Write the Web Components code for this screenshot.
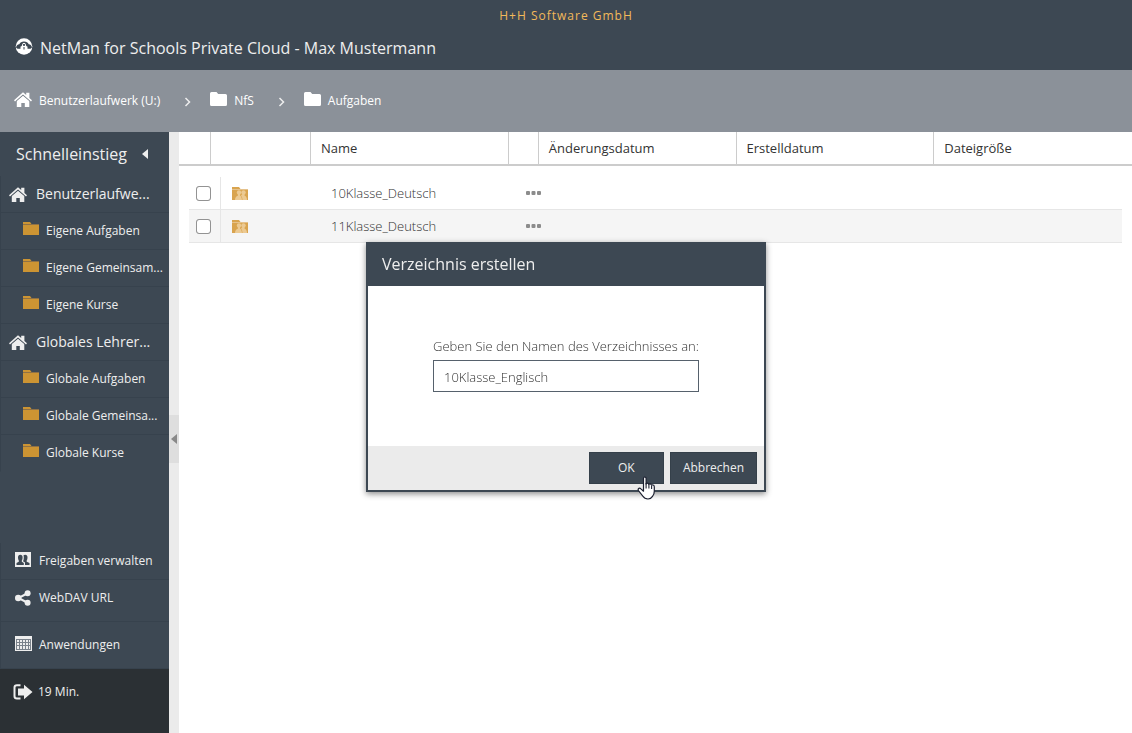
<!DOCTYPE html>
<html lang="de">
<head>
<meta charset="utf-8">
<meta name="viewport" content="width=device-width, initial-scale=1">
<title>NetMan for Schools Private Cloud</title>
<style>
  html, body { margin: 0; }
  body {
    --dark: #3d4853;
    --light: #eeeeee;
    font: 13px/20px "Open Sans", "Noto Sans", sans-serif;
    color: #333;
    background: #fff;
  }
</style>
</head>
<body>
<nm-app>
  <nm-header slot="header" company="H+H Software GmbH">NetMan for Schools Private Cloud - Max Mustermann</nm-header>
  <nm-breadcrumb slot="path">
    <nm-crumb icon="home">Benutzerlaufwerk (U:)</nm-crumb>
    <nm-crumb icon="folder-round">NfS</nm-crumb>
    <nm-crumb icon="folder-round">Aufgaben</nm-crumb>
  </nm-breadcrumb>
  <nm-sidebar slot="sidebar" heading="Schnelleinstieg">
    <nm-nav-item kind="group" icon="home">Benutzerlaufwe...</nm-nav-item>
    <nm-nav-item kind="child" icon="folder">Eigene Aufgaben</nm-nav-item>
    <nm-nav-item kind="child" icon="folder">Eigene Gemeinsam...</nm-nav-item>
    <nm-nav-item kind="child" icon="folder">Eigene Kurse</nm-nav-item>
    <nm-nav-item kind="group" icon="home">Globales Lehrer...</nm-nav-item>
    <nm-nav-item kind="child" icon="folder">Globale Aufgaben</nm-nav-item>
    <nm-nav-item kind="child" icon="folder">Globale Gemeinsa...</nm-nav-item>
    <nm-nav-item kind="child" icon="folder">Globale Kurse</nm-nav-item>
    <nm-nav-item slot="tools" kind="tool" icon="users">Freigaben verwalten</nm-nav-item>
    <nm-nav-item slot="tools" kind="tool" icon="share">WebDAV URL</nm-nav-item>
    <nm-nav-item slot="tools" kind="tool" tall icon="grid">Anwendungen</nm-nav-item>
    <nm-nav-item slot="session" kind="session" icon="exit">19 Min.</nm-nav-item>
  </nm-sidebar>
  <nm-file-table></nm-file-table>
</nm-app>
<nm-dialog heading="Verzeichnis erstellen">
  <nm-field label="Geben Sie den Namen des Verzeichnisses an:" value="10Klasse_Englisch"></nm-field>
  <nm-button slot="actions" wide>OK<nm-icon slot="pointer" name="hand"></nm-icon></nm-button>
  <nm-button slot="actions">Abbrechen</nm-button>
</nm-dialog>

<script>
const base = '*, *::before, *::after { box-sizing: border-box; }';

const define = (name, render) => customElements.define(name, class extends HTMLElement {
  constructor() {
    super();
    this.attachShadow({ mode: 'open' });
  }
  connectedCallback() {
    const { css, html } = render(this);
    const template = document.createElement('template');
    template.innerHTML = `<style>${base}${css}</style>${html}`;
    this.shadowRoot.replaceChildren(template.content.cloneNode(true));
  }
});

const icons = {
  cloud: [18, 17, `<circle cx="9" cy="8.500" r="8.300" fill="#fff"/><path d="M1 9.500Q1.500 6.500 4.300 6.300 5.500 3.600 9 3.600t4.700 2.700Q16.500 6.500 17 9.500L15.500 10.800H12.500V8.500H5.500V10.800H2.500z" fill="#3d4853"/><path d="M6.300 7.800h5.400v5H6.300z" fill="#fff"/><path d="M7.500 8V6.800a1.500 1.500 0 0 1 3 0V8" fill="none" stroke="#fff" stroke-width="1"/><path d="M8.500 9h1v2.500h-1z" fill="#3d4853"/>`],
  home: [18, 15, `<path d="M9 3.800 15.300 9V15h-4.500v-4H7.300v4H2.800V9z" fill="currentColor"/><path d="M0 8.200 9 .3l3.200 2.800V.8h3.200v5.100L18 8.200l-1 1.200-8-7-8 7z" fill="currentColor"/><path d="m2 9.300 7-6.200 7 6.200" fill="none" stroke="#3d4853" stroke-opacity=".35" stroke-width=".6"/>`],
  folder: [16, 13, `<path d="M0 0h7l1.500 2H0zM0 3h16v10H0z" fill="#cc9433"/><path d="M0 2h16v1H0z" fill="#8f7145"/>`],
  'folder-round': [17, 14, `<path d="M1.500 0h5l1.700 2h7.300Q17 2 17 3.500v9q0 1.500-1.500 1.500h-14Q0 14 0 12.500v-11Q0 0 1.500 0z" fill="currentColor"/>`],
  'folder-shared': [16, 13, `<path d="M0 0h7l1.500 2H0zM0 3h16v10H0z" fill="#d9a44f"/><path d="M0 2h16v1H0z" fill="#e5c28c"/><g fill="#ecca93"><circle cx="7" cy="5.500" r="2.200"/><circle cx="11.500" cy="5.500" r="2.200"/><path d="M3 13q0-3.500 3-4.500V7h2v1.500q1.500.5 2 4.500zM10.500 13q0-3-1.500-4.500L10.500 7h2v1.500q2.500 1 2.500 4.500z"/></g>`],
  users: [16, 15, `<path d="M0 0h16v15H0z" fill="currentColor"/><g fill="#3d4853"><path d="M1.500 13v-2l2.300-1.300V8.500Q3 7.500 3 5.500 3 2.800 5.300 2.800T7.600 5.500q0 2-.8 3v1.200L8.800 11v2z"/><path d="M10 13v-2.500L8 9.200q.8-1 .8-3.700 0-1.500-.4-2Q9 2.800 10.200 2.800q2.300 0 2.300 2.700 0 2-.8 3v1.200l2.800 1.300v2z"/></g>`],
  share: [16, 16, `<path d="m13 3-9.500 5L13 13" fill="none" stroke="currentColor" stroke-width="2"/><circle cx="3.200" cy="8" r="3.200" fill="currentColor"/><circle cx="12.600" cy="3.300" r="3" fill="currentColor"/><circle cx="12.600" cy="12.700" r="3" fill="currentColor"/>`],
  grid: [17, 15, `<path d="M0 0h17v15H0z" fill="currentColor"/><path d="M1.500 3.500v10M4.500 3.500v10M7.500 3.500v10M10.500 3.500v10M13.500 3.500v10M15.500 3.500v10M1 3.500h15M1 6.500h15M1 9.500h15M1 13.500h15" stroke="#7a828b" stroke-width="1"/>`],
  exit: [20, 16, `<path d="M7.500 1.200H4Q1.500 1.200 1.500 3.500v8.700q0 2.300 2.500 2.300h3.500" fill="none" stroke="currentColor" stroke-width="2"/><path d="M5 4.500h6V.8l8.500 7.200-8.500 7.200v-3.700H5z" fill="currentColor"/>`],
  chevron: [7, 10, `<path d="m1.500 1 4 4-4 4" fill="none" stroke="#eee" stroke-width="1.500"/>`],
  left: [6, 10, `<path d="M6 0v10L0 5z" fill="currentColor"/>`],
  dots: [15, 4, `<path d="M0 1q0-1 1-1h2q1 0 1 1v2q0 1-1 1H1Q0 4 0 3zM5.500 1q0-1 1-1h2q1 0 1 1v2q0 1-1 1h-2q-1 0-1-1zM11 1q0-1 1-1h2q1 0 1 1v2q0 1-1 1h-2q-1 0-1-1z" fill="#8c8c8c"/>`],
  hand: [19, 25, `<path d="M6.500 2.500q0-1.500 1.300-1.500T9.100 2.500V8q.4-.8 1.300-.8 1.200 0 1.400 1.300.4-.6 1.200-.6 1.200 0 1.500 1.300.4-.4 1.100-.4 1.700 0 1.700 1.900v4.500q0 3-1.800 5.200-1.600 2.600-4.500 2.600-3.500 0-5-2.700L1.400 14.500q-.7-1.500.5-2.100 1-.5 2 .5l2.600 2.300z" fill="#fff" stroke="#1c2030" stroke-width="1.200" stroke-linejoin="round"/><path d="M9.100 7v5.500M11.900 8.500v4M14.600 9.500v3.500" stroke="#1c2030" stroke-width="1.100"/>`]
};

define('nm-icon', (el) => {
  const [w, h, body] = icons[el.getAttribute('name')];
  return {
    css: ':host { display: inline-block; flex: none; line-height: 0; } svg { display: block; }',
    html: `<svg width="${w}" height="${h}" viewBox="0 0 ${w} ${h}" aria-hidden="true">${body}</svg>`
  };
});

define('nm-app', () => ({
  css: `
    :host { display: flex; flex-direction: column; min-height: 100vh; }
    .work { flex: 1; display: flex; }
    main { flex: 1; min-width: 0; }`,
  html: '<slot name="header"></slot><slot name="path"></slot><div class="work"><slot name="sidebar"></slot><main><slot></slot></main></div>'
}));

define('nm-header', (el) => ({
  css: `
    :host { display: block; background: var(--dark); color: var(--light); padding: 6px 15px 9px; }
    p { margin: 0; text-align: center; color: #f2b95a; font-size: 12px; letter-spacing: 1px; }
    .title { display: flex; align-items: center; gap: 7px; padding-top: 10px; }
    nm-icon { padding-bottom: 4px; }
    h1 { margin: 0; font-size: 16px; line-height: 25px; font-weight: 400; }`,
  html: `<header><p>${el.getAttribute('company')}</p><div class="title"><nm-icon name="cloud"></nm-icon><h1><slot></slot></h1></div></header>`
}));

define('nm-breadcrumb', () => ({
  css: `
    :host { display: block; background: #8b9199; color: #fff; }
    nav { display: flex; padding: 20px 14px; min-height: 62px; }`,
  html: '<nav aria-label="Pfad"><slot></slot></nav>'
}));

define('nm-crumb', (el) => ({
  css: `
    :host { display: flex; align-items: center; font-size: 12px; }
    a { display: flex; align-items: center; gap: 7px; color: inherit; text-decoration: none; }
    a nm-icon { padding-bottom: 4px; }
    .next { margin: 2px 19px 0 24px; }
    :host(:last-child) .next { display: none; }`,
  html: `<a href="#"><nm-icon name="${el.getAttribute('icon')}"></nm-icon><span><slot></slot></span></a><nm-icon class="next" name="chevron"></nm-icon>`
}));

define('nm-sidebar', (el) => ({
  css: `
    :host { display: flex; width: 179px; flex: none; }
    aside { flex: 1; display: flex; flex-direction: column; background: var(--dark); color: var(--light); }
    .top { display: flex; align-items: center; gap: 15px; height: 44px; padding-left: 16px; }
    h2 { margin: 0; font-size: 16px; font-weight: 400; }
    button { display: flex; align-items: center; border: 0; margin: 0; padding: 0; background: none; color: inherit; font: inherit; cursor: pointer; }
    .tools { margin-top: auto; }
    .rail { width: 10px; background: #ebebeb; display: flex; align-items: center; padding-top: 12px; }
    .rail button { width: 10px; height: 48px; background: #dedede; color: #888; padding-left: 2px; }`,
  html: `
    <aside>
      <div class="top"><h2>${el.getAttribute('heading')}</h2><button aria-label="Einklappen"><nm-icon name="left"></nm-icon></button></div>
      <nav><slot></slot></nav>
      <nav class="tools"><slot name="tools"></slot></nav>
      <slot name="session"></slot>
    </aside>
    <div class="rail"><button aria-label="Seitenleiste ausblenden"><nm-icon name="left"></nm-icon></button></div>`
}));

define('nm-nav-item', (el) => ({
  css: `
    :host { display: block; }
    a { display: flex; align-items: center; height: 37px; color: inherit; text-decoration: none; white-space: nowrap; border-bottom: 1px solid #37424d; border-left: 1px solid #37424d; }
    :host([kind="group"]) a { font-size: 14px; padding-left: 8px; gap: 9px; }
    :host([kind="child"]) a { font-size: 12px; padding-left: 22px; gap: 7px; }
    :host([kind="child"]) nm-icon { padding-bottom: 5px; }
    :host([kind="child"]:nth-of-type(8)) a { border-bottom-color: transparent; }
    :host([kind="tool"]) a { font-size: 12px; padding-left: 14px; }
    :host([kind="tool"]) nm-icon { width: 24px; }
    :host([kind="tool"]:not([icon="share"])) nm-icon { padding-bottom: 4px; }
    :host([icon="share"]) a { height: 42px; padding-bottom: 6px; }
    :host([tall]) a { height: 47px; }
    :host([kind="session"]) { background: #2b3034; height: 64px; }
    :host([kind="session"]) a { border: 0; height: 46px; font-size: 12px; padding-left: 13px; gap: 5px; }`,
  html: `<a href="#"><nm-icon name="${el.getAttribute('icon')}"></nm-icon><span><slot></slot></span></a>`
}));

define('nm-file-table', () => {
  const rows = ['10Klasse_Deutsch', '11Klasse_Deutsch'].map((name) => `
    <tr>
      <td class="pick"><input type="checkbox" aria-label="${name}"></td>
      <td class="type"><nm-icon name="folder-shared"></nm-icon></td>
      <td class="name">${name}</td>
      <td class="more"><button aria-label="Optionen"><nm-icon name="dots"></nm-icon></button></td>
      <td></td><td></td><td></td>
    </tr>`).join('');
  return {
    css: `
      :host { display: block; }
      table, thead, tbody { display: block; }
      tr { display: grid; grid-template-columns: 32px 100px 1fr 30px 1fr 1fr 1fr; }
      th { height: 32px; padding: 0 10px; border-right: 1px solid #ccc; text-align: left; font-weight: 400; line-height: 32px; }
      th:last-child { border-right: 0; }
      thead { border-bottom: 2px solid #ccc; }
      tbody { margin: 11px 10px 0; font-weight: 300; }
      tbody tr { border-bottom: 1px solid #e6e6e6; }
      tbody tr:nth-child(even) { background: #f5f5f5; }
      td { height: 32px; padding: 0 10px; display: flex; align-items: center; }
      .pick { padding: 0 7px; border-right: 1px solid #e6e6e6; }
      .type { padding-left: 11px; }
      .more { padding: 0 0 0 12px; }
      input { appearance: none; width: 15px; height: 15px; margin: 0; border: 1px solid #888; border-radius: 3px; background: #fff; outline: 1px solid #aaa5; outline-offset: -1px; }
      button { display: flex; border: 0; padding: 0; background: none; }`,
    html: `
      <table>
        <thead><tr><th></th><th></th><th scope="col">Name</th><th></th><th scope="col">Änderungsdatum</th><th scope="col">Erstelldatum</th><th scope="col">Dateigröße</th></tr></thead>
        <tbody>${rows}</tbody>
      </table>`
  };
});

define('nm-dialog', (el) => ({
  css: `
    :host { position: fixed; inset: 0; display: flex; align-items: center; justify-content: center; }
    section { width: 400px; border: 2px solid var(--dark); background: #fff; box-shadow: 0 2px 6px rgba(0, 0, 0, .45); }
    h2 { margin: 0; padding: 9px 14px 11px; background: var(--dark); color: var(--light); font-size: 16px; line-height: 22px; font-weight: 400; }
    .content { padding: 50px 65px 54px; }
    footer { display: flex; justify-content: flex-end; gap: 6px; padding: 6px 7px; background: #ebebeb; }`,
  html: `<section role="dialog" aria-labelledby="title"><h2 id="title">${el.getAttribute('heading')}</h2><div class="content"><slot></slot></div><footer><slot name="actions"></slot></footer></section>`
}));

define('nm-field', (el) => ({
  css: `
    :host { display: block; font-weight: 300; }
    label { display: block; margin-bottom: 4px; white-space: nowrap; }
    input { display: block; width: 100%; height: 32px; margin: 0; padding: 2px 10px 0; border: 1px solid #56616c; border-radius: 0; background: #fff; font: inherit; color: inherit; outline: 0; }`,
  html: `<label for="value">${el.getAttribute('label')}</label><input id="value" type="text" value="${el.getAttribute('value')}">`
}));

define('nm-button', () => ({
  css: `
    :host { display: block; position: relative; }
    button { display: block; height: 32px; padding: 0 12px; border: 1px solid #35404a; background: var(--dark); color: var(--light); font: inherit; font-size: 12px; }
    :host([wide]) button { width: 75px; }
    ::slotted([slot="pointer"]) { position: absolute; left: 48px; top: 24px; }`,
  html: '<button type="button"><slot></slot></button><slot name="pointer"></slot>'
}));
</script>
</body>
</html>
